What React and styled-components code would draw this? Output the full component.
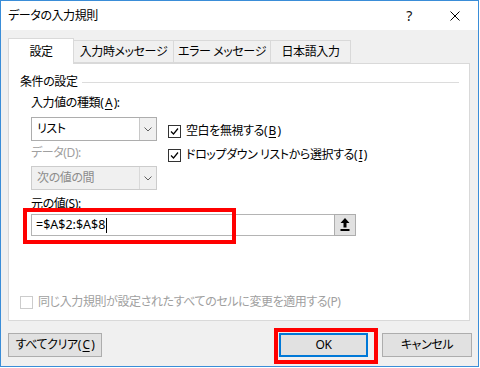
import styled, { createGlobalStyle } from "styled-components";

const Global = createGlobalStyle`
  html, body {
    margin: 0;
    padding: 0;
    background: #ffffff;
  }
  body {
    font-family: "Noto Sans", "Noto Sans CJK JP", sans-serif;
    font-size: 12px;
    line-height: 16px;
    color: #000;
    font-feature-settings: "palt";
    letter-spacing: -0.4px;
  }
`;

const Window = styled.div`
  width: 479px;
  height: 367px;
  box-sizing: border-box;
  border: 1px solid #3a8dd8;
  display: flex;
  flex-direction: column;
  background: #f0f0f0;
`;

const TitleBar = styled.div`
  height: 29px;
  background: #fff;
  display: flex;
  align-items: center;
  padding-left: 7px;
`;

const Title = styled.div`
  flex: 1;
  font-size: 12px;
`;

const TitleButton = styled.div`
  width: 46px;
  height: 29px;
  display: flex;
  align-items: center;
  justify-content: center;
  font-size: 14px;
  color: #111;
`;

const Body = styled.div`
  flex: 1;
  padding: 8px 8px 0 7px;
  display: flex;
  flex-direction: column;
`;

const Tabs = styled.div`
  display: flex;
  align-items: flex-end;
  height: 26px;
  position: relative;
  z-index: 1;
  margin-bottom: -1px;
`;

const Tab = styled.div`
  box-sizing: border-box;
  width: ${({ w }) => w}px;
  height: ${({ active }) => (active ? 26 : 23)}px;
  margin-bottom: ${({ active }) => (active ? 0 : 1)}px;
  background: ${({ active }) => (active ? "#fff" : "#f0f0f0")};
  border: 1px solid #d9d9d9;
  border-bottom: ${({ active }) => (active ? "none" : "1px solid #d9d9d9")};
  border-left: ${({ first }) => (first ? "1px solid #d9d9d9" : "none")};
  display: flex;
  align-items: center;
  justify-content: center;
  padding-top: ${({ active }) => (active ? 1 : 0)}px;
  white-space: nowrap;
`;

const Panel = styled.div`
  box-sizing: border-box;
  height: 258px;
  background: #fff;
  border: 1px solid #d9d9d9;
  padding: 10px 10px 6px 11px;
  display: flex;
  flex-direction: column;
`;

const GroupHeader = styled.div`
  display: flex;
  align-items: center;
  height: 16px;
`;

const GroupLine = styled.div`
  flex: 1;
  height: 1px;
  background: #dcdcdc;
  margin-left: 4px;
`;

const GroupContent = styled.div`
  margin-left: 11px;
  margin-top: 5px;
  display: flex;
  flex-direction: column;
`;

const Columns = styled.div`
  display: flex;
  gap: 11px;
`;

const LeftColumn = styled.div`
  width: 126px;
  display: flex;
  flex-direction: column;
`;

const RightColumn = styled.div`
  display: flex;
  flex-direction: column;
  padding-top: 24px;
`;

const Label = styled.div`
  height: 16px;
  color: ${({ disabled }) => (disabled ? "#a0a0a0" : "#000")};
  margin-top: ${({ mt }) => mt || 0}px;
`;

const Combo = styled.div`
  box-sizing: border-box;
  height: ${({ h }) => h}px;
  margin-top: ${({ mt }) => mt}px;
  display: flex;
  border: 1px solid ${({ disabled }) => (disabled ? "#cccccc" : "#adadad")};
  background: ${({ disabled }) => (disabled ? "#f0f0f0" : "#fff")};
  color: ${({ disabled }) => (disabled ? "#8c8c8c" : "#000")};
`;

const ComboText = styled.div`
  flex: 1;
  display: flex;
  align-items: center;
  padding-left: 5px;
`;

const ComboArrow = styled.div`
  width: 16px;
  border-left: 1px solid ${({ disabled }) => (disabled ? "#d9d9d9" : "#c8c8c8")};
  background: #f0f0f0;
  display: flex;
  align-items: center;
  justify-content: center;
`;

const CheckRow = styled.div`
  height: 24px;
  display: flex;
  align-items: center;
  gap: 5px;
  white-space: nowrap;
  color: ${({ disabled }) => (disabled ? "#a0a0a0" : "#000")};
`;

const Box = styled.div`
  box-sizing: border-box;
  width: 13px;
  height: 13px;
  flex: none;
  border: 1px solid ${({ disabled }) => (disabled ? "#cccccc" : "#333")};
  background: #fff;
  display: flex;
  align-items: center;
  justify-content: center;
`;

const SourceRow = styled.div`
  position: relative;
  margin-top: 2px;
  width: 325px;
  height: 22px;
  display: flex;
`;

const SourceInput = styled.div`
  box-sizing: border-box;
  flex: 1;
  border: 1px solid #b4b4b4;
  border-right: none;
  display: flex;
  align-items: center;
  padding-left: 4px;
  font-size: 12.5px;
  letter-spacing: 0;
`;

const Caret = styled.span`
  display: inline-block;
  width: 1px;
  height: 15px;
  background: #000;
  margin-left: 1px;
`;

const PickButton = styled.div`
  box-sizing: border-box;
  width: 22px;
  height: 22px;
  border: 1px solid #adadad;
  background: #e1e1e1;
  display: flex;
  align-items: center;
  justify-content: center;
`;

const Highlight = styled.div`
  position: absolute;
  box-sizing: border-box;
  border: 4px solid #ff0000;
  left: ${({ x }) => x}px;
  top: ${({ y }) => y}px;
  width: ${({ w }) => w}px;
  height: ${({ h }) => h}px;
  pointer-events: none;
`;

const PanelBottom = styled.div`
  margin-top: auto;
`;

const Footer = styled.div`
  display: flex;
  padding-top: 12px;
  margin-right: -2px;
`;

const Button = styled.div`
  position: relative;
  box-sizing: border-box;
  width: ${({ w }) => w}px;
  height: 24px;
  margin-left: ${({ ml }) => ml || 0}px;
  background: #e1e1e1;
  border: 1px solid ${({ primary }) => (primary ? "#0078d7" : "#adadad")};
  box-shadow: ${({ primary }) => (primary ? "inset 0 0 0 1px #0078d7" : "none")};
  display: flex;
  align-items: center;
  justify-content: center;
  white-space: nowrap;
`;

const Key = styled.span`
  text-decoration: underline;
  text-underline-offset: 2px;
  margin: 0 1.5px;
`;

const Spacer = styled.div`
  flex: 1;
`;

function Chevron() {
  return (
    <svg width="8" height="5" viewBox="0 0 8 5">
      <path d="M0.5 0.5 L4 4 L7.5 0.5" fill="none" stroke="#606060" strokeWidth="1" />
    </svg>
  );
}

function Check() {
  return (
    <svg width="11" height="11" viewBox="0 0 11 11">
      <path d="M2 5.5 L4.5 8 L9 2.5" fill="none" stroke="#000" strokeWidth="1.2" />
    </svg>
  );
}

function CloseIcon() {
  return (
    <svg width="10" height="10" viewBox="0 0 10 10">
      <path d="M0.5 0.5 L9.5 9.5 M9.5 0.5 L0.5 9.5" stroke="#000" strokeWidth="1" />
    </svg>
  );
}

function UploadIcon() {
  return (
    <svg width="10" height="14" viewBox="0 0 10 14">
      <polygon points="5,0 9.5,5 6.5,5 6.5,9.5 3.5,9.5 3.5,5 0.5,5" fill="#000" />
      <rect x="0.5" y="11" width="9" height="2" fill="#000" />
    </svg>
  );
}

export default function App() {
  return (
    <>
      <Global />
      <Window>
        <TitleBar>
          <Title>データの入力規則</Title>
          <TitleButton>?</TitleButton>
          <TitleButton>
            <CloseIcon />
          </TitleButton>
        </TitleBar>
        <Body>
          <Tabs>
            <Tab active first w={66}>設定</Tab>
            <Tab w={100}>入力時メッセージ</Tab>
            <Tab w={97}>エラー メッセージ</Tab>
            <Tab w={80}>日本語入力</Tab>
          </Tabs>
          <Panel>
            <GroupHeader>
              条件の設定
              <GroupLine />
            </GroupHeader>
            <GroupContent>
              <Columns>
                <LeftColumn>
                  <Label>
                    入力値の種類(<Key>A</Key>):
                  </Label>
                  <Combo h={24} mt={6}>
                    <ComboText>リスト</ComboText>
                    <ComboArrow>
                      <Chevron />
                    </ComboArrow>
                  </Combo>
                  <Label disabled mt={4}>
                    データ(D):
                  </Label>
                  <Combo disabled h={24} mt={5}>
                    <ComboText>次の値の間</ComboText>
                    <ComboArrow disabled>
                      <Chevron />
                    </ComboArrow>
                  </Combo>
                </LeftColumn>
                <RightColumn>
                  <CheckRow>
                    <Box>
                      <Check />
                    </Box>
                    <span>
                      空白を無視する(<Key>B</Key>)
                    </span>
                  </CheckRow>
                  <CheckRow>
                    <Box>
                      <Check />
                    </Box>
                    <span>
                      ドロップダウン リストから選択する(<Key>I</Key>)
                    </span>
                  </CheckRow>
                </RightColumn>
              </Columns>
              <Label mt={6}>元の値(S):</Label>
              <SourceRow>
                <SourceInput>
                  =$A$2:$A$8
                  <Caret />
                </SourceInput>
                <PickButton>
                  <UploadIcon />
                </PickButton>
                <Highlight x={-8} y={-6} w={213} h={36} />
              </SourceRow>
            </GroupContent>
            <PanelBottom>
              <CheckRow disabled>
                <Box disabled />
                <span>同じ入力規則が設定されたすべてのセルに変更を適用する(P)</span>
              </CheckRow>
            </PanelBottom>
          </Panel>
          <Footer>
            <Button w={94}>
              すべてクリア(<Key>C</Key>)
            </Button>
            <Spacer />
            <Button primary w={89}>
              OK
              <Highlight x={-6} y={-6} w={104} h={36} />
            </Button>
            <Button w={90} ml={14}>
              キャンセル
            </Button>
          </Footer>
        </Body>
      </Window>
    </>
  );
}
